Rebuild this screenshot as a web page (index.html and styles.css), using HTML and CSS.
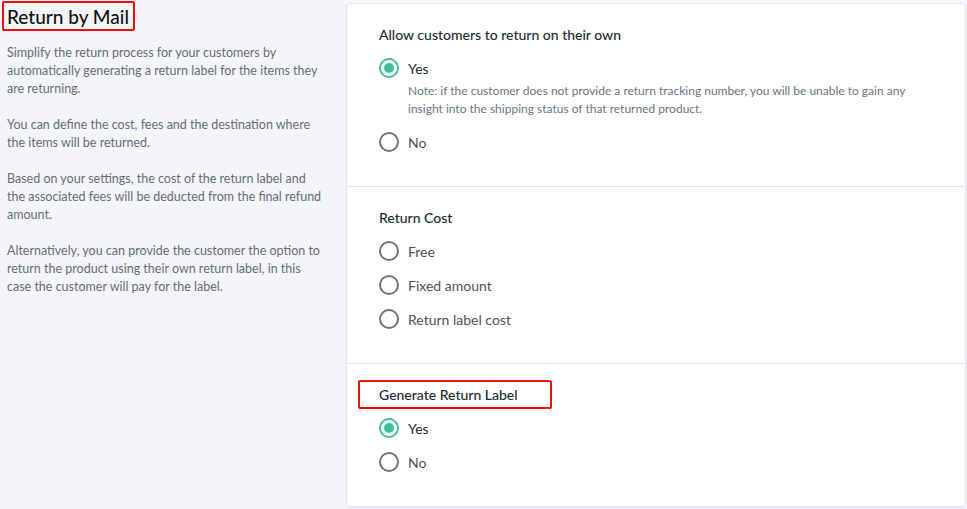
FILE: index.html
```html
<!DOCTYPE html>
<html lang="en">
  <head>
    <meta charset="UTF-8" />
    <meta name="viewport" content="width=device-width, initial-scale=1.0" />
    <title>Return by Mail</title>
    <link rel="stylesheet" href="styles.css">
  </head>

  <body>
    <div class="layout">
      <!-- Description column -->
      <aside class="intro">
        <h2 class="intro-title"><span class="marked">Return by Mail</span></h2>
        <p>Simplify the return process for your customers by automatically generating a return label for the items they are returning.</p>
        <p>You can define the cost, fees and the destination where the items will be returned.</p>
        <p>Based on your settings, the cost of the return label and the associated fees will be deducted from the final refund amount.</p>
        <p>Alternatively, you can provide the customer the option to return the product using their own return label, in this case the customer will pay for the label.</p>
      </aside>

      <!-- Settings card -->
      <main class="panel">
        <section class="group">
          <h3 class="group-title">Allow customers to return on their own</h3>
          <label class="option">
            <input type="radio" name="own" checked />
            <span>Yes</span>
          </label>
          <p class="note">Note: if the customer does not provide a return tracking number, you will be unable to gain any insight into the shipping status of that returned product.</p>
          <label class="option">
            <input type="radio" name="own" />
            <span>No</span>
          </label>
        </section>

        <section class="group">
          <h3 class="group-title">Return Cost</h3>
          <label class="option">
            <input type="radio" name="cost" />
            <span>Free</span>
          </label>
          <label class="option">
            <input type="radio" name="cost" />
            <span>Fixed amount</span>
          </label>
          <label class="option">
            <input type="radio" name="cost" />
            <span>Return label cost</span>
          </label>
        </section>

        <section class="group">
          <h3 class="group-title"><span class="marked marked-wide">Generate Return Label</span></h3>
          <label class="option">
            <input type="radio" name="label" checked />
            <span>Yes</span>
          </label>
          <label class="option">
            <input type="radio" name="label" />
            <span>No</span>
          </label>
        </section>
      </main>
    </div>
  </body>
</html>
```

FILE: styles.css
```css
/* Page */
body {
  font-family: Lato, "Open Sans", sans-serif;
  background-color: #f4f5f8;
  color: #212b36;
  margin: 0;
  padding: 0;
}

.layout {
  display: flex;
  align-items: flex-start;
}

/* Left description column */
.intro {
  width: 346px;
  flex-shrink: 0;
  box-sizing: border-box;
  padding: 5px 21px 0 7px;
}

.intro-title {
  margin: 0 0 15px;
  font-size: 19px;
  line-height: 24px;
  font-weight: 500;
  color: #111;
}

.intro p {
  margin: 0 0 18px;
  font-size: 12.5px;
  line-height: 18px;
  color: #646e78;
}

/* Red annotation boxes */
.marked {
  position: relative;
  display: inline-block;
}

.marked::after {
  content: "";
  position: absolute;
  top: -4px;
  bottom: -2px;
  left: -5px;
  right: -6px;
  border: 2px solid #f20d0d;
  border-radius: 2px;
}

.marked-wide::after {
  top: -5px;
  bottom: -4px;
  left: -21px;
  right: -34px;
}

/* Settings card */
.panel {
  flex: 1;
  margin: 3px 1px 0 0;
  background-color: #fff;
  border: 1px solid #dfe3ea;
  border-radius: 4px;
}

.group {
  padding: 21px 32px 27px;
  border-bottom: 1px solid #dfe3ea;
}

.group-title {
  margin: 0 0 6px;
  font-size: 14px;
  line-height: 20px;
  font-weight: 500;
  color: #212b36;
}

.option {
  display: flex;
  align-items: center;
  height: 34px;
  font-size: 14px;
  color: #4b535e;
  cursor: pointer;
}

.option input {
  appearance: none;
  -webkit-appearance: none;
  width: 20px;
  height: 20px;
  margin: 0 9px 0 0;
  border: 2px solid #737373;
  border-radius: 50%;
  box-sizing: border-box;
  display: grid;
  place-items: center;
}

.option input:checked {
  border-color: #3ebf9f;
}

.option input:checked::after {
  content: "";
  width: 10px;
  height: 10px;
  border-radius: 50%;
  background-color: #3ebf9f;
}

.option input:checked + span {
  color: #212b36;
}

.note {
  margin: -3px 0 7px 29px;
  font-size: 12px;
  line-height: 18px;
  color: #6b7580;
}
```
